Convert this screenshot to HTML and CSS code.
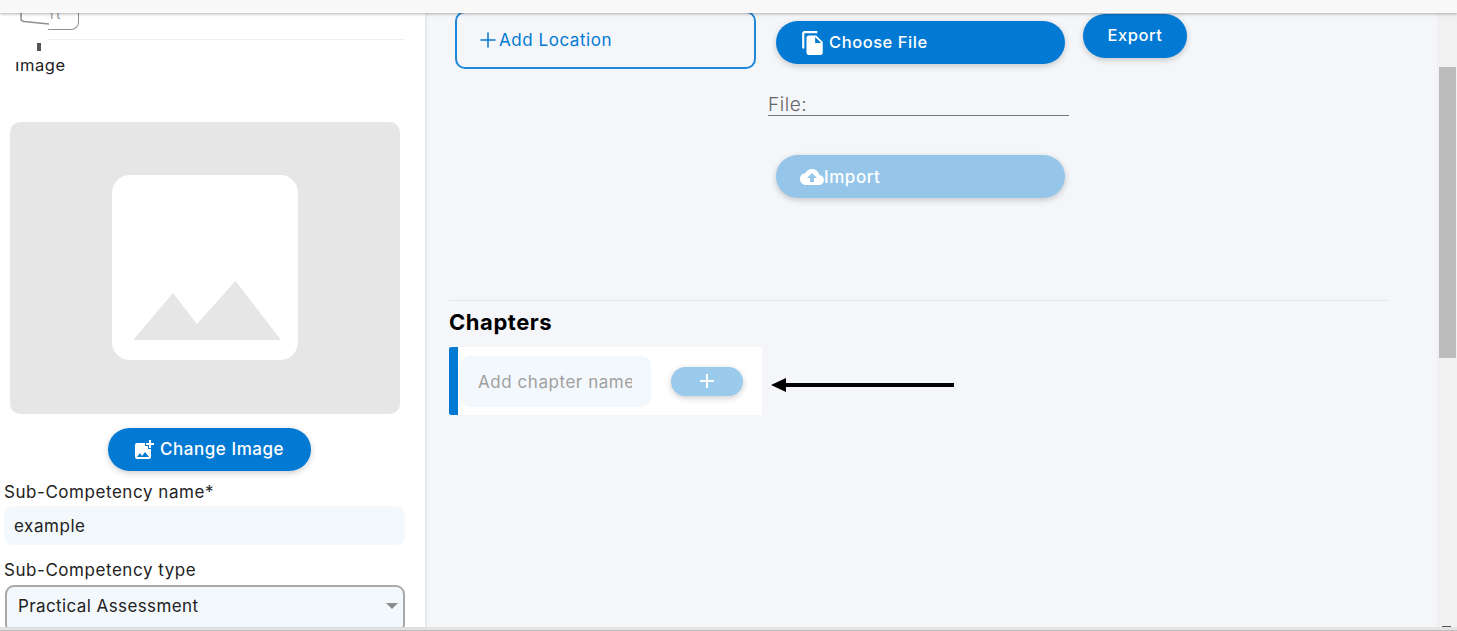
FILE: index.html
```html
<!DOCTYPE html>
<html lang="en">
<head>
  <meta charset="UTF-8">
  <title>Sub-Competency</title>
  <link rel="stylesheet" href="styles.css">
</head>
<body>

  <div class="topbar"></div>

  <div class="content">
    <aside class="sidebar">
      <div class="glitch">
        <svg class="glitch-left" width="29" height="12" viewBox="0 0 29 12"><path d="M1 0V6Q1 8 4 8.500L29 11" fill="none" stroke="#8f8f8f" stroke-width="1.500"/></svg>
        <div class="edit-btn">rt</div>
        <span class="glitch-mark"></span>
      </div>
      <div class="image-label">Image</div>

      <div class="image-box">
        <div class="image-inner">
          <svg width="186" height="185" viewBox="0 0 186 185"><path d="M21 165L61 118L85 149L123.500 106L169 165Z" fill="#e6e6e6"/></svg>
        </div>
      </div>

      <button class="btn btn-change">
        <svg width="24" height="24" viewBox="0 0 24 24"><path d="M19 7v2.990s-1.990.010-2 0V7h-3s.010-1.990 0-2h3V2h2v3h3v2h-3zm-3 4V8h-3V5H5c-1.100 0-2 .900-2 2v12c0 1.100.900 2 2 2h12c1.100 0 2-.900 2-2v-8h-3zM5 19l3-4 2 3 3-4 4 5H5z" fill="#fff"/></svg>
        <span>Change Image</span>
      </button>

      <label class="field-label">Sub-Competency name*</label>
      <div class="input-box">example</div>

      <label class="field-label label-type">Sub-Competency type</label>
      <div class="select-box">
        Practical Assessment
        <span class="caret"></span>
      </div>
    </aside>

    <main class="main">
      <div class="top-row">
        <div class="add-location">
          <svg width="16" height="16" viewBox="0 0 16 16"><path d="M8 .500V15.500M.500 8H15.500" stroke="#0279d3" stroke-width="1.500" fill="none"/></svg>
          Add Location
        </div>

        <div class="file-col">
          <button class="btn btn-file">
            <svg width="26" height="26" viewBox="0 0 24 24"><path d="M16 1H4c-1.100 0-2 .900-2 2v14h2V3h12V1zm-1 4l6 6v10c0 1.100-.900 2-2 2H7.990C6.890 23 6 22.100 6 21l.010-14c0-1.100.890-2 1.990-2h7zm-1 7h5.500L14 6.500V12z" fill="#fff"/></svg>
            <span>Choose File</span>
          </button>
          <div class="file-name">File:</div>
          <button class="btn btn-file btn-import">
            <svg width="24" height="24" viewBox="0 0 24 24"><path d="M19.350 10.040C18.670 6.590 15.640 4 12 4 9.110 4 6.600 5.640 5.350 8.040 2.340 8.360 0 10.910 0 14c0 3.310 2.690 6 6 6h13c2.760 0 5-2.240 5-5 0-2.640-2.050-4.780-4.650-4.960zM14 13v4h-4v-4H7l5-5 5 5h-3z" fill="#fff"/></svg>
            <span>Import</span>
          </button>
        </div>

        <button class="btn btn-export"><span>Export</span></button>
      </div>

      <div class="chapters">
        <h2>Chapters</h2>
        <div class="chapter-line">
          <div class="chapter-row">
            <div class="chapter-input"><span>Add chapter name</span></div>
            <button class="btn btn-plus">
              <svg width="16" height="16" viewBox="0 0 16 16"><path d="M8 1V15M1 8H15" stroke="#fff" stroke-width="2" fill="none"/></svg>
            </button>
          </div>
          <svg class="arrow" width="184" height="16" viewBox="0 0 184 16"><path d="M0 8L15 1V6H183V10H15V15Z" fill="#000"/></svg>
        </div>
      </div>
    </main>

    <div class="scrollbar">
      <div class="thumb"></div>
      <div class="scroll-end"></div>
    </div>
  </div>

  <div class="bottombar"></div>

</body>
</html>
```

FILE: styles.css
```css
* {
  box-sizing: border-box;
}

html, body {
  height: 100%;
}

body {
  margin: 0;
  display: flex;
  flex-direction: column;
  overflow: hidden;
  font-family: Inter, "Open Sans", sans-serif;
  font-size: 17px;
  letter-spacing: 0.55px;
  color: #222;
  background: #f4f6fa;
}

.topbar {
  height: 13px;
  flex: none;
  background: #f8f8f8;
  box-shadow: 0 1px 3px rgba(0, 0, 0, 0.3);
  position: relative;
  z-index: 2;
}

.content {
  flex: 1;
  min-height: 0;
  display: flex;
}

.bottombar {
  height: 4px;
  flex: none;
  background: #e4e4e4;
  border-bottom: 1px solid #bdbdbd;
}

/* left column */
.sidebar {
  width: 425px;
  flex: none;
  background: #fff;
  box-shadow: 1px 0 3px rgba(0, 0, 0, 0.1);
  overflow: hidden;
  padding: 0 20px 0 4px;
  position: relative;
  z-index: 1;
}

.glitch {
  height: 46px;
  position: relative;
}

.glitch::after {
  content: "";
  position: absolute;
  left: 44px;
  right: 0;
  top: 26px;
  border-top: 1px solid #eceef1;
}

.glitch-left {
  position: absolute;
  left: 16px;
  top: 0;
}

.edit-btn {
  position: absolute;
  left: 44px;
  top: -4px;
  width: 31px;
  height: 21px;
  padding-left: 2px;
  border: solid #8f8f8f;
  border-width: 0 1.500px 1.500px 0;
  border-radius: 0 0 8px 0;
  font-size: 14px;
  line-height: 10px;
  color: #999;
}

.glitch-mark {
  position: absolute;
  left: 33px;
  top: 30px;
  width: 4px;
  height: 8px;
  background: #555;
}

.image-label {
  height: 14px;
  margin: -1px 0 50px 11px;
  font-size: 16.500px;
  line-height: 14px;
  color: #222;
  position: relative;
}

/* white patch that cuts the tops of the first letters */
.image-label::before {
  content: "";
  position: absolute;
  left: -2px;
  top: -4px;
  width: 35px;
  height: 8px;
  background: #fff;
}

.image-box {
  width: 390px;
  height: 292px;
  margin-left: 6px;
  padding-bottom: 1px;
  background: #e6e6e6;
  border-radius: 10px;
  display: flex;
  align-items: center;
  justify-content: center;
}

.image-inner {
  width: 186px;
  height: 185px;
  background: #fff;
  border-radius: 18px;
}

.btn {
  display: flex;
  align-items: center;
  border: none;
  border-radius: 22px;
  background: #0279d3;
  color: #fff;
  font-family: inherit;
  font-size: 16.500px;
  font-weight: 500;
  letter-spacing: 0.55px;
  box-shadow: 0 2px 6px rgba(0, 0, 0, 0.2);
  padding: 0;
}

.btn span {
  margin-top: -2px;
}

.btn-change {
  width: 203px;
  height: 43px;
  margin: 14px 0 0 104px;
  padding-left: 24px;
  gap: 4px;
  font-size: 17px;
}

.field-label {
  display: block;
  margin-top: 10px;
  height: 20px;
  line-height: 22px;
}

.input-box {
  width: 401px;
  height: 39px;
  margin-top: 5px;
  padding-left: 10px;
  line-height: 41px;
  background: #f3f8fc;
  border-radius: 9px;
}

.label-type {
  margin-top: 14px;
}

.select-box {
  width: 400px;
  height: 48px;
  margin: 6px 0 0 1px;
  padding-left: 11px;
  line-height: 39px;
  letter-spacing: 0.4px;
  background: #f3f8fc;
  border: 2px solid #a9a9a9;
  border-radius: 9px;
  position: relative;
}

.caret {
  position: absolute;
  right: 5px;
  top: 16px;
  border: 6px solid transparent;
  border-top: 6px solid #8c8c8c;
  border-bottom: none;
}

/* right side */
.main {
  flex: 1;
  min-width: 0;
}

.top-row {
  height: 287px;
  display: flex;
  align-items: flex-start;
  padding-left: 30px;
}

.add-location {
  width: 301px;
  height: 58px;
  margin-top: -2px;
  display: flex;
  align-items: center;
  gap: 3px;
  padding-left: 23px;
  border: 2px solid #1f88d8;
  border-radius: 10px;
  color: #0279d3;
}

.file-col {
  width: 301px;
  margin: 8px 0 0 12px;
}

.btn-file {
  width: 289px;
  height: 43px;
  margin-left: 8px;
  padding-left: 24px;
  gap: 3px;
}

.file-name {
  height: 25px;
  margin-top: 27px;
  border-bottom: 1.500px solid #777;
  font-size: 19px;
  line-height: 27px;
  color: #666;
  font-weight: 300;
}

.btn-import {
  margin-top: 39px;
  background: #95c6ea;
  gap: 0;
  font-size: 17px;
}

.btn-import span {
  margin-top: 0;
}

.btn-export {
  width: 104px;
  height: 44px;
  margin: 1px 0 0 14px;
  justify-content: center;
}

.chapters {
  margin: 0 49px 0 24px;
  border-top: 1px solid #e4e6ec;
}

h2 {
  margin: 9px 0 11px;
  height: 26px;
  line-height: 24px;
  font-size: 22px;
  font-weight: 700;
  color: #000;
}

.chapter-line {
  display: flex;
  align-items: center;
  gap: 9px;
}

.chapter-row {
  width: 313px;
  height: 68px;
  display: flex;
  align-items: center;
  gap: 20px;
  background: #fff;
  border-left: 9px solid #0279d3;
  border-radius: 2px 0 0 2px;
  padding-left: 2px;
}

.chapter-input {
  width: 191px;
  height: 51px;
  flex: none;
  padding: 0 19px 0 18px;
  line-height: 53px;
  background: #f3f8fc;
  border-radius: 10px;
  color: #a0a0a0;
}

.chapter-input span {
  display: block;
  overflow: hidden;
  white-space: nowrap;
}

.btn-plus {
  width: 72px;
  height: 29px;
  border-radius: 15px;
  background: #9acaec;
  justify-content: center;
}

.arrow {
  flex: none;
  margin-top: 8px;
}

.scrollbar {
  width: 20px;
  flex: none;
  background: #f1f1f1;
  padding: 54px 1px 0 2px;
  position: relative;
}

.thumb {
  height: 291px;
  background: #bcbcbc;
}

.scroll-end {
  position: absolute;
  left: 5px;
  bottom: 0;
  width: 9px;
  height: 1px;
  background: #555;
}
```
